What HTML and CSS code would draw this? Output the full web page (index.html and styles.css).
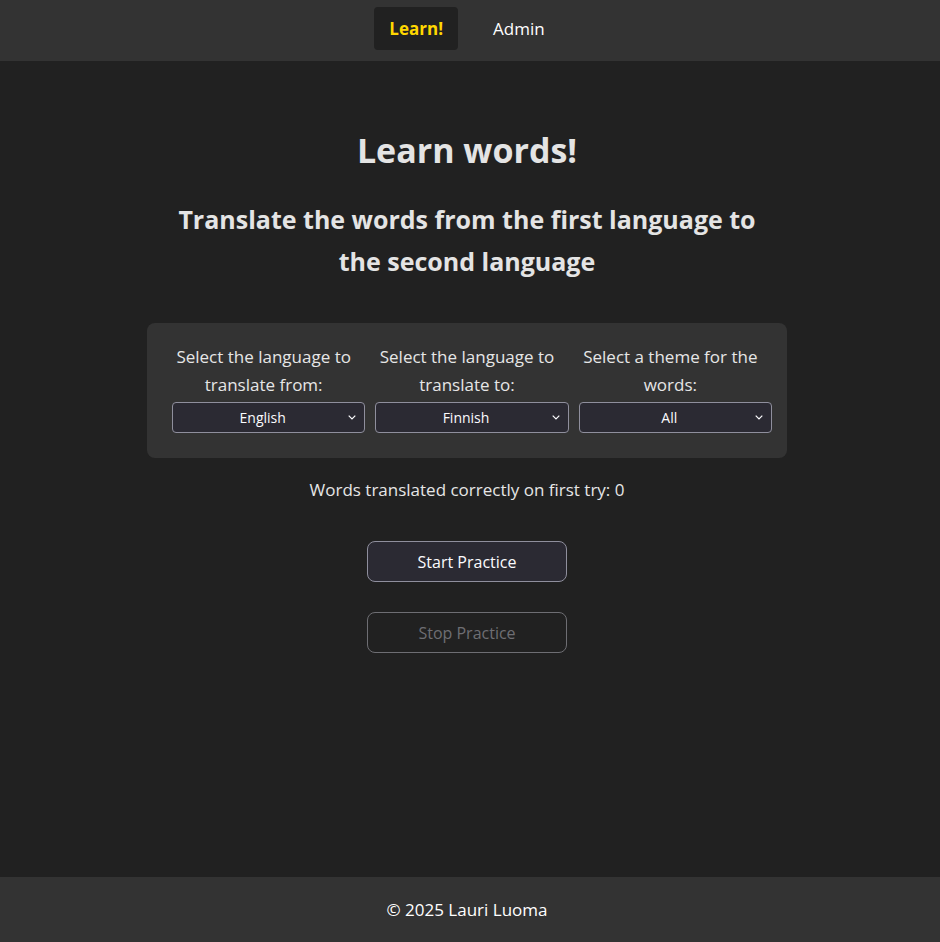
FILE: index.html
```html
<!DOCTYPE html>
<html lang="en">
<head>
<meta charset="utf-8">
<title>Learn words</title>
<link rel="stylesheet" href="styles.css">
</head>
<body>
<div class="app">
  <nav class="nav">
    <a class="nav-link active" href="#">Learn!</a>
    <a class="nav-link" href="#">Admin</a>
  </nav>
  <main class="main">
    <h1 class="title">Learn words!</h1>
    <h2 class="subtitle">Translate the words from the first language to the second language</h2>
    <div class="panel">
      <div class="field">
        <label class="field-label">Select the language to translate from:</label>
        <select class="select"><option>English</option></select>
      </div>
      <div class="field">
        <label class="field-label">Select the language to translate to:</label>
        <select class="select"><option>Finnish</option></select>
      </div>
      <div class="field">
        <label class="field-label">Select a theme for the words:</label>
        <select class="select"><option>All</option></select>
      </div>
    </div>
    <p class="score">Words translated correctly on first try: 0</p>
    <button class="btn">Start Practice</button>
    <button class="btn" disabled>Stop Practice</button>
  </main>
  <footer class="footer">© 2025 Lauri Luoma</footer>
</div>
</body>
</html>
```
FILE: styles.css
```css
* { box-sizing: border-box; }
html, body { margin: 0; padding: 0; }
body {
  background: #212121;
  color: #e6e6e6;
  font-family: "Open Sans", "Noto Sans", sans-serif;
  font-size: 17px;
}
.app {
  min-height: 942px;
  display: flex;
  flex-direction: column;
}
.nav {
  background: #333333;
  height: 61px;
  display: flex;
  justify-content: center;
  align-items: flex-start;
  gap: 20px;
  padding: 7px 6px 0 0;
}
.nav-link {
  display: block;
  height: 43px;
  line-height: 43px;
  padding: 0 15px;
  border-radius: 4px;
  color: #ffffff;
  text-decoration: none;
  font-size: 17px;
}
.nav-link.active {
  background: #212121;
  color: #ffd700;
  font-weight: 700;
}
.main {
  flex: 1;
  display: flex;
  flex-direction: column;
  align-items: center;
  padding: 65px 6px 0 0;
}
.title {
  margin: 0;
  font-size: 34px;
  line-height: 48px;
  font-weight: 700;
  color: #e4e4e4;
}
.subtitle {
  margin: 24px 0 0;
  width: 600px;
  text-align: center;
  font-size: 25px;
  line-height: 42px;
  font-weight: 700;
  color: #e4e4e4;
}
.panel {
  margin-top: 41px;
  width: 640px;
  background: #333333;
  border-radius: 8px;
  padding: 20px 15px 25px 25px;
  display: grid;
  grid-template-columns: repeat(3, 1fr);
  gap: 10px;
}
.field {
  display: flex;
  flex-direction: column;
  align-items: stretch;
  text-align: center;
}
.field-label {
  font-size: 17px;
  line-height: 28px;
  color: #e6e6e6;
  margin-bottom: 3px;
  padding-right: 10px;
}
.select {
  height: 31px;
  background: #2b2a33;
  color: #fbfbfe;
  border: 1px solid #8f8f9d;
  border-radius: 4px;
  font-family: inherit;
  font-size: 14px;
  text-align: center;
  text-align-last: center;
  appearance: none;
  -webkit-appearance: none;
  padding: 0 28px 0 16px;
  background-image: url("data:image/svg+xml;utf8,<svg xmlns='http://www.w3.org/2000/svg' width='8' height='5' viewBox='0 0 8 5'><path d='M0.7 0.7l3.3 3.3 3.3-3.3' fill='none' stroke='%23fbfbfe' stroke-width='1.2'/></svg>");
  background-repeat: no-repeat;
  background-position: right 8px center;
}
.score {
  margin: 20px 0 0;
  line-height: 24px;
  color: #e6e6e6;
}
.btn {
  margin-top: 39px;
  width: 200px;
  height: 41px;
  border-radius: 8px;
  background: #2b2a33;
  border: 1px solid #8f8f9d;
  color: #fbfbfe;
  font-family: inherit;
  font-size: 16px;
}
.btn + .btn { margin-top: 30px; }
.btn:disabled {
  background: #212121;
  color: #6e6e73;
  border-color: #6e6e73;
}
.footer {
  background: #333333;
  height: 65px;
  display: flex;
  align-items: center;
  justify-content: center;
  padding-right: 6px;
  color: #ffffff;
  font-size: 17px;
}
```
